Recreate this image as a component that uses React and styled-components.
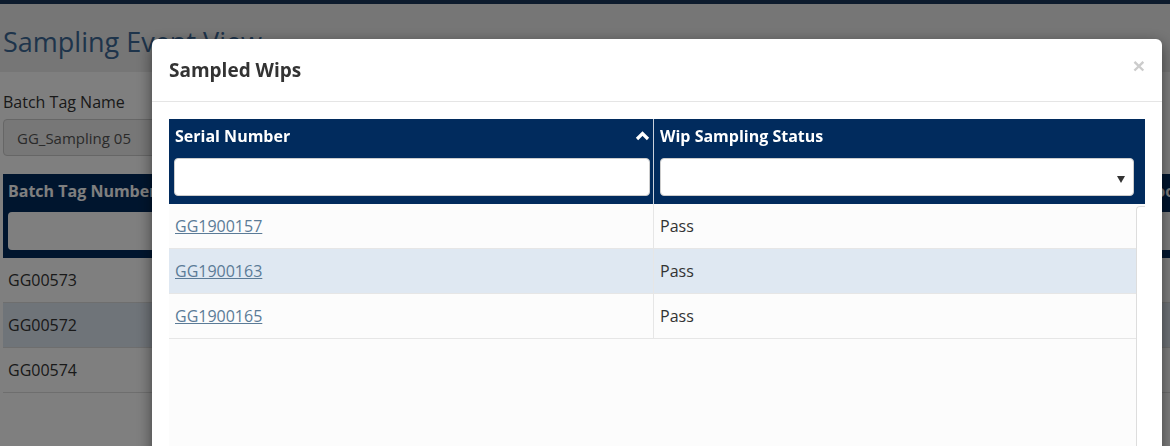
import React from "react";
import styled, { createGlobalStyle } from "styled-components";

const GlobalStyle = createGlobalStyle`
  html, body {
    margin: 0;
    padding: 0;
    overflow: hidden;
    background: #ffffff;
    font-family: "Open Sans", "Liberation Sans", sans-serif;
    color: #333333;
  }
  * {
    box-sizing: border-box;
  }
`;

const NAVY = "#012b5d";

const pageColumns = ["Batch Tag Number", "Sample Date", "Sampling Plan", "Wip Count", "Tool Name"];
const pageRows = ["GG00573", "GG00572", "GG00574"];
const wips = [
  { serial: "GG1900157", status: "Pass" },
  { serial: "GG1900163", status: "Pass" },
  { serial: "GG1900165", status: "Pass" },
];

const App = () => {
  return (
    <>
      <GlobalStyle />
      <Page>
        <TopBar />
        <TitleBand>
          <PageTitle>Sampling Event View</PageTitle>
        </TitleBand>
        <Content>
          <FieldLabel>Batch Tag Name</FieldLabel>
          <DisabledInput>GG_Sampling 05</DisabledInput>
          <PageTable>
            <PageHeadRow>
              {pageColumns.map((col) => (
                <PageHeadCell key={col}>
                  <span>{col}</span>
                  <FilterBox />
                </PageHeadCell>
              ))}
            </PageHeadRow>
            {pageRows.map((row, i) => (
              <PageRow key={row} selected={i === 1}>
                <PageCell>{row}</PageCell>
              </PageRow>
            ))}
          </PageTable>
        </Content>
      </Page>

      <Backdrop>
        <Dialog>
          <DialogHeader>
            <DialogTitle>Sampled Wips</DialogTitle>
            <CloseButton>×</CloseButton>
          </DialogHeader>
          <DialogBody>
            <Grid>
              <GridHead>
                <HeadCell>
                  <HeadTitle>
                    <span>Serial Number</span>
                    <svg width="15" height="10" viewBox="0 0 15 10">
                      <path d="M2 8 L7.5 2.5 L13 8" fill="none" stroke="#ffffff" strokeWidth="3.2" strokeLinejoin="miter" />
                    </svg>
                  </HeadTitle>
                  <TextFilter />
                </HeadCell>
                <HeadCell divided wide>
                  <HeadTitle>
                    <span>Wip Sampling Status</span>
                  </HeadTitle>
                  <SelectFilter>
                    <svg width="8" height="7" viewBox="0 0 8 7">
                      <path d="M0 0 H8 L4 7 Z" fill="#333333" />
                    </svg>
                  </SelectFilter>
                </HeadCell>
              </GridHead>
              <GridBody>
                <Rows>
                  {wips.map((wip, i) => (
                    <Row key={wip.serial} selected={i === 1}>
                      <Cell>
                        <SerialLink>{wip.serial}</SerialLink>
                      </Cell>
                      <Cell divided>{wip.status}</Cell>
                    </Row>
                  ))}
                </Rows>
                <ScrollTrack />
              </GridBody>
            </Grid>
          </DialogBody>
        </Dialog>
      </Backdrop>
    </>
  );
};

export default App;

const Page = styled.div`
  width: 1170px;
  min-height: 446px;
  display: flex;
  flex-direction: column;
`;

const TopBar = styled.div`
  height: 4px;
  background: #1a365a;
`;

const TitleBand = styled.div`
  height: 68px;
  background: #ececec;
  padding: 21px 3px 0;
`;

const PageTitle = styled.h1`
  margin: 0;
  font-size: 27px;
  font-weight: 400;
  line-height: 34px;
  color: #3c6896;
`;

const Content = styled.div`
  padding: 19px 0 0 3px;
  display: flex;
  flex-direction: column;
`;

const FieldLabel = styled.label`
  font-size: 16px;
  line-height: 22px;
  color: #333333;
`;

const DisabledInput = styled.div`
  margin-top: 6px;
  width: 320px;
  height: 37px;
  border: 1px solid #cccccc;
  border-radius: 4px;
  background: #eeeeee;
  padding: 0 13px;
  display: flex;
  align-items: center;
  font-size: 15px;
  color: #555555;
`;

const PageTable = styled.div`
  margin-top: 18px;
  display: flex;
  flex-direction: column;
`;

const PageHeadRow = styled.div`
  display: grid;
  grid-template-columns: repeat(4, 284.5px) 1fr;
  background: ${NAVY};
`;

const PageHeadCell = styled.div`
  padding: 6px 5px 8px;
  display: flex;
  flex-direction: column;
  gap: 10px;
  color: #ffffff;
  font-size: 16px;
  font-weight: 700;
  line-height: 22px;
  white-space: nowrap;
`;

const FilterBox = styled.div`
  height: 38px;
  background: #ffffff;
  border-radius: 4px;
`;

const PageRow = styled.div`
  height: 45px;
  display: flex;
  align-items: center;
  border-bottom: 1px solid #dddddd;
  background: ${(props) => (props.selected ? "#dfe8f2" : "#ffffff")};
`;

const PageCell = styled.div`
  padding-left: 5px;
  font-size: 16px;
  color: #333333;
`;

const Backdrop = styled.div`
  position: fixed;
  inset: 0;
  background: rgba(0, 0, 0, 0.5);
  padding: 39px 0 0 152px;
`;

const Dialog = styled.div`
  width: 1010px;
  background: #ffffff;
  border-radius: 6px;
  box-shadow: 0 5px 15px rgba(0, 0, 0, 0.5);
  display: flex;
  flex-direction: column;
`;

const DialogHeader = styled.div`
  height: 63px;
  padding: 0 17px 0 17px;
  display: flex;
  align-items: center;
  justify-content: space-between;
  border-bottom: 1px solid #e5e5e5;
`;

const DialogTitle = styled.h4`
  margin: 0;
  font-size: 19px;
  font-weight: 700;
  color: #333333;
`;

const CloseButton = styled.span`
  font-family: "Liberation Sans", sans-serif;
  font-size: 21px;
  font-weight: 700;
  color: #cccccc;
  line-height: 1;
  margin-top: -10px;
`;

const DialogBody = styled.div`
  padding: 17px 17px 0;
  background: #ffffff;
`;

const Grid = styled.div`
  display: flex;
  flex-direction: column;
`;

const GridHead = styled.div`
  display: grid;
  grid-template-columns: 484px 1fr;
  background: ${NAVY};
`;

const HeadCell = styled.div`
  padding: 6px ${(props) => (props.wide ? "11px" : "3px")} 8px 5px;
  display: flex;
  flex-direction: column;
  gap: 11px;
  border-left: ${(props) => (props.divided ? "1px solid #c9d1dc" : "none")};
`;

const HeadTitle = styled.div`
  display: flex;
  align-items: center;
  justify-content: space-between;
  padding-left: 1px;
  color: #ffffff;
  font-size: 16px;
  font-weight: 700;
  line-height: 22px;
`;

const TextFilter = styled.div`
  height: 38px;
  background: #ffffff;
  border: 1px solid #cccccc;
  border-radius: 4px;
`;

const SelectFilter = styled(TextFilter)`
  margin-left: 1px;
  display: flex;
  align-items: center;
  justify-content: flex-end;
  padding-right: 8px;
  padding-top: 4px;
`;

const GridBody = styled.div`
  display: flex;
  min-height: 300px;
  background: #fcfcfc;
`;

const Rows = styled.div`
  flex: 1;
  display: flex;
  flex-direction: column;
`;

const Row = styled.div`
  display: grid;
  grid-template-columns: 484px 1fr;
  height: 45px;
  border-bottom: 1px solid #e6e6e6;
  background: ${(props) => (props.selected ? "#dfe8f2" : "#fcfcfc")};
`;

const Cell = styled.div`
  display: flex;
  align-items: center;
  padding-left: 6px;
  font-size: 16px;
  color: #333333;
  border-left: ${(props) => (props.divided ? "1px solid #e6e6e6" : "none")};
`;

const SerialLink = styled.a`
  color: #5b7b97;
  text-decoration: underline;
  cursor: pointer;
`;

const ScrollTrack = styled.div`
  width: 9px;
  margin-top: 2px;
  border-left: 1px solid #dddddd;
  border-top: 1px solid #dddddd;
  border-top-left-radius: 4px;
  background: #ffffff;
`;
